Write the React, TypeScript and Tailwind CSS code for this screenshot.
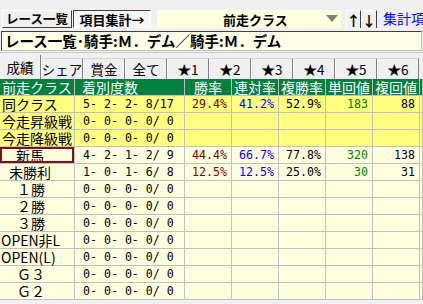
import React from "react";

const jp = "font-['Noto_Sans_CJK_JP','Noto_Sans',sans-serif]";
const mono = "font-['DejaVu_Sans_Mono','Liberation_Mono',monospace]";

type Row = {
  label: string;
  pl: number;
  rec: string;
  win?: string;
  ren?: string;
  fuku?: string;
  tan?: string;
  fk?: string;
  hot?: boolean;
  sel?: boolean;
};

const rows: Row[] = [
  { label: "同クラス", pl: 2, rec: "5- 2- 2- 8/17", win: "29.4%", ren: "41.2%", fuku: "52.9%", tan: "183", fk: "88", hot: true },
  { label: "今走昇級戦", pl: 2, rec: "0- 0- 0- 0/ 0", hot: true },
  { label: "今走降級戦", pl: 2, rec: "0- 0- 0- 0/ 0", hot: true },
  { label: "新馬", pl: 16, rec: "4- 2- 1- 2/ 9", win: "44.4%", ren: "66.7%", fuku: "77.8%", tan: "320", fk: "138", sel: true },
  { label: "未勝利", pl: 9, rec: "1- 0- 1- 6/ 8", win: "12.5%", ren: "12.5%", fuku: "25.0%", tan: "30", fk: "31" },
  { label: "１勝", pl: 17, rec: "0- 0- 0- 0/ 0" },
  { label: "２勝", pl: 17, rec: "0- 0- 0- 0/ 0" },
  { label: "３勝", pl: 17, rec: "0- 0- 0- 0/ 0" },
  { label: "OPEN非L", pl: 1, rec: "0- 0- 0- 0/ 0" },
  { label: "OPEN(L)", pl: 1, rec: "0- 0- 0- 0/ 0" },
  { label: "Ｇ３", pl: 17, rec: "0- 0- 0- 0/ 0" },
  { label: "Ｇ２", pl: 17, rec: "0- 0- 0- 0/ 0" },
];

const tabs = ["シェア", "賞金", "全て", "★1", "★2", "★3", "★4", "★5", "★6"];

const raised =
  "shrink-0 border border-t-white border-l-white border-r-[#404040] border-b-[#404040] bg-[#f0f0f0]";

export default function App() {
  return (
    <div className={`w-[423px] h-[304px] overflow-hidden bg-[#f0f0f0] ${jp}`}>
      {/* tool bar */}
      <div className="flex items-start pt-[10px] pl-[2px] h-[28px] overflow-hidden">
        <div className={`${raised} w-[70px] h-[18px] flex items-center justify-center text-[12.5px] font-bold leading-none whitespace-nowrap`}>
          レース一覧
        </div>
        <div className="shrink-0 ml-[1px] w-[78px] h-[18px] flex items-center justify-center text-[13px] font-bold leading-none whitespace-nowrap border border-t-[#404040] border-l-[#404040] border-r-white border-b-white bg-[#f6f6f6]">
          項目集計→
        </div>
        <div className="shrink-0 ml-[6px] w-[184px] h-[18px] bg-[#ffffe0] flex items-center relative">
          <span className="ml-[66px] text-[13px] font-bold leading-none whitespace-nowrap">前走クラス</span>
          <svg className="absolute left-[169px] top-[5px]" width="12" height="8" viewBox="0 0 12 8">
            <polygon points="0,0 12,0 6,7" fill="#808080" />
          </svg>
        </div>
        <div className={`${raised} ml-[5px] w-[15px] h-[19px] flex items-center justify-center text-[14px] font-bold leading-none`}>↑</div>
        <div className={`${raised} w-[16px] h-[19px] flex items-center justify-center text-[14px] font-bold leading-none`}>↓</div>
        <span className="shrink-0 ml-[6px] mt-[1px] text-[14px] leading-none text-[#0000ff] whitespace-nowrap">集計項目</span>
      </div>

      {/* title */}
      <div className="mx-[1px] mt-[3px] h-[20px] border border-t-[#404040] border-l-[#404040] border-r-[#c0c0c0] border-b-[#c0c0c0] bg-[#ffffe8] flex items-center pl-[3px] text-[14.5px] font-bold leading-none whitespace-nowrap overflow-hidden">
        レース一覧･騎手:Ｍ．デム／騎手:Ｍ．デム
      </div>
      <div className="mt-[1px] h-[1px] bg-[#c8c8c8]" />

      {/* tabs */}
      <div className="mt-[2px] h-[24px] flex items-end text-[13.5px] whitespace-nowrap overflow-hidden">
        <div className="shrink-0 w-[41px] h-[24px] flex items-center justify-center border-r border-r-[#808080]">成績</div>
        {tabs.map((t) => (
          <div
            key={t}
            className="shrink-0 w-[42px] h-[21px] flex items-center justify-center border-t border-t-[#d4d4d4] border-l border-l-white border-r border-r-[#808080]"
          >
            {t}
          </div>
        ))}
      </div>

      {/* table */}
      <div className="grid grid-cols-[75px_110px_47px_47px_47px_47px_47px_3px] text-[14px] leading-[16px]">
        {["前走クラス", "着別度数", "勝率", "連対率", "複勝率", "単回値", "複回値", ""].map((h, i) => (
          <div
            key={i}
            className={`h-[17px] bg-[#007f3f] text-white border-r border-b border-[#c0c0c0] flex items-center whitespace-nowrap ${
              i === 1 ? "pl-[7px]" : "justify-center"
            }`}
          >
            {h}
          </div>
        ))}
        {rows.map((r) => {
          const bg = r.hot ? "bg-[#ffff80]" : "bg-[#ffffe0]";
          const cell = `h-[17px] ${bg} border-r border-b border-[#c0c0c0] flex items-center whitespace-pre`;
          const num = `${cell} justify-end pr-[4px] ${mono} text-[11.6px]`;
          return (
            <React.Fragment key={r.label}>
              <div className={`${cell} relative`} style={{ paddingLeft: r.pl }}>
                {r.label}
                {r.sel && <div className="absolute left-0 top-0 w-[74px] h-[16px] border-2 border-[#7a1414]" />}
              </div>
              <div className={`${cell} pl-[8px] ${mono} text-[11.6px]`}>{r.rec}</div>
              <div className={`${num} text-[#800000]`}>{r.win ?? ""}</div>
              <div className={`${num} text-[#0000ff]`}>{r.ren ?? ""}</div>
              <div className={`${num} text-black`}>{r.fuku ?? ""}</div>
              <div className={`${num} text-[#008000]`}>{r.tan ?? ""}</div>
              <div className={`${num} text-black`}>{r.fk ?? ""}</div>
              <div className={cell} />
            </React.Fragment>
          );
        })}
      </div>
    </div>
  );
}
